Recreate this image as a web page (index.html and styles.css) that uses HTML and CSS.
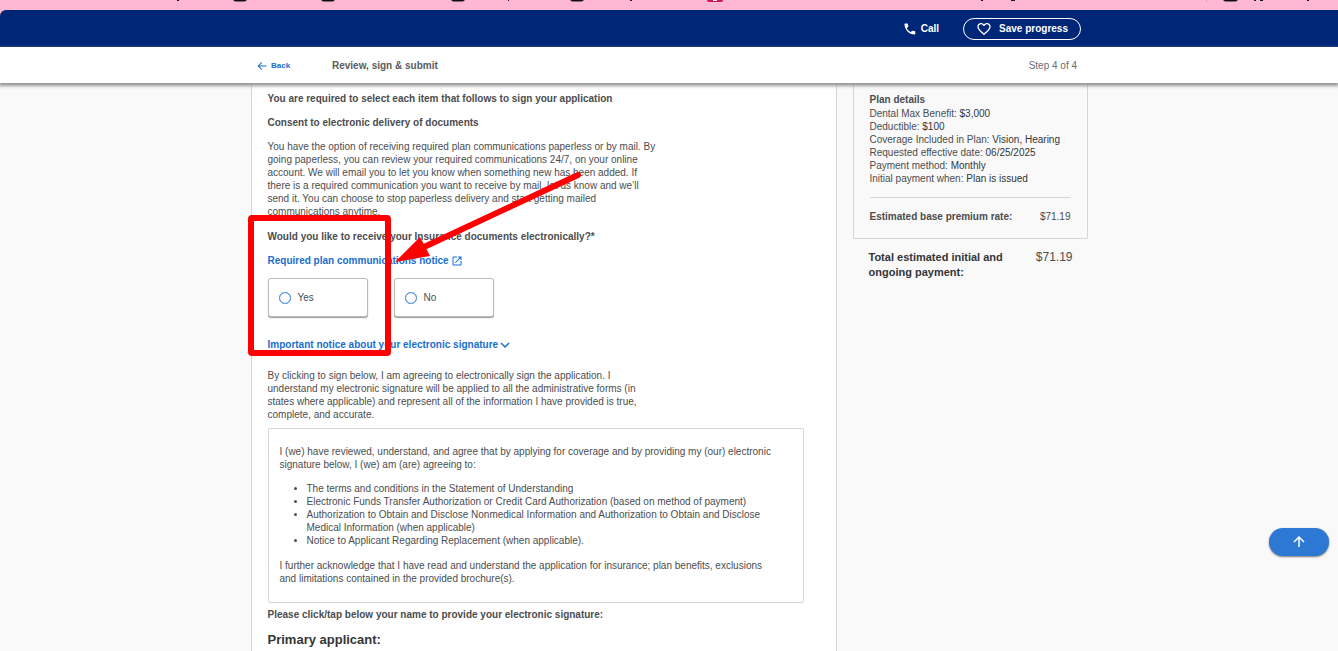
FILE: index.html
```html
<!DOCTYPE html>
<html lang="en">
<head>
<meta charset="utf-8">
<title>Review, sign &amp; submit</title>
<link rel="stylesheet" href="styles.css">
</head>
<body>
<div class="page">
  <div class="strip" aria-hidden="true">
    <svg class="strip-marks" width="1338" height="10" viewBox="0 0 1338 10">
      <path fill="#111" d="M177 0h2v1h-2zM233 0h14l-2 1.500h-10zM321 0h14l-2 1.500h-10zM451 0h14l-2 1.500h-10zM508 0h1v1h-1zM570 0h14l-2 1.500h-10zM630 0h2v1h-2zM981 0h2v1h-2zM1011 0h4v1h-4zM1223 0h15l-2 1.500h-11zM1254 0h2v1h-2zM1260 0h3v1h-3zM1307 0h2v1h-2z"/>
      <path fill="#c9a0b0" d="M1206 0h1v2h-1z"/>
      <path fill="#d4145a" d="M707 0h16q0 2-3 2h-10q-3 0-3-2z"/>
      <path fill="#fff" d="M713 0h4v1h-4z"/>
    </svg>
  </div>
  <header class="topbar">
    <div class="wrap topbar-actions">
      <button class="call" type="button">
        <svg width="14" height="14" viewBox="0 0 24 24" fill="#fff"><path d="M6.600 10.800c1.400 2.800 3.800 5.100 6.600 6.600l2.200-2.200c.3-.3.700-.4 1-.2 1.100.4 2.300.6 3.600.6.600 0 1 .4 1 1V20.500c0 .6-.4 1-1 1C10.600 21.500 2.500 13.400 2.500 3.500c0-.6.400-1 1-1H7.500c.6 0 1 .4 1 1 0 1.300.2 2.500.6 3.600.1.300 0 .7-.2 1z"/></svg>
        Call
      </button>
      <button class="save" type="button">
        <svg width="16" height="16" viewBox="0 0 24 24" fill="#fff"><path d="M16.500 3c-1.740 0-3.410.81-4.500 2.090C10.910 3.810 9.240 3 7.500 3 4.420 3 2 5.420 2 8.500c0 3.780 3.400 6.860 8.550 11.540L12 21.350l1.450-1.320C18.600 15.360 22 12.280 22 8.500 22 5.420 19.580 3 16.500 3zm-4.400 15.550l-.1.100-.1-.1C7.140 14.240 4 11.390 4 8.500 4 6.500 5.500 5 7.500 5c1.540 0 3.040.99 3.570 2.360h1.870C13.460 5.990 14.960 5 16.500 5c2 0 3.500 1.500 3.500 3.500 0 2.890-3.140 5.740-7.900 10.050z"/></svg>
        Save progress
      </button>
    </div>
  </header>
  <nav class="stepbar">
    <div class="wrap stepbar-row">
      <a class="back" href="#">
        <svg width="12" height="12" viewBox="0 0 24 24" fill="currentColor"><path d="M21 11H6.800l5.600-5.600L11 4l-8 8 8 8 1.400-1.400L6.800 13H21z"/></svg>
        Back
      </a>
      <h1 class="step-title">Review, sign &amp; submit</h1>
      <span class="step-count">Step 4 of 4</span>
    </div>
  </nav>
  <div class="wrap columns">
    <main class="form">
      <h2 class="heading">You are required to select each item that follows to sign your application</h2>
      <h2 class="heading">Consent to electronic delivery of documents</h2>
      <p class="copy">You have the option of receiving required plan communications paperless or by mail. By going paperless, you can review your required communications 24/7, on your online account. We will email you to let you know when something new has been added. If<br>there is a required communication you want to receive by mail, let us know and we’ll<br>send it. You can choose to stop paperless delivery and start getting mailed<br>communications anytime.</p>
      <fieldset class="question">
        <legend class="heading">Would you like to receive your Insurance documents electronically?*</legend>
        <a class="link" href="#">Required plan communications notice
          <svg width="12" height="12" viewBox="0 0 24 24" fill="currentColor"><path d="M19 19H5V5h7V3H5a2 2 0 0 0-2 2v14a2 2 0 0 0 2 2h14c1.100 0 2-.9 2-2v-7h-2zM14 3v2h3.590l-9.830 9.830 1.410 1.410L19 6.410V10h2V3z"/></svg>
        </a>
        <div class="choices">
          <label class="choice"><input class="radio" type="radio" name="delivery">Yes</label>
          <label class="choice"><input class="radio" type="radio" name="delivery">No</label>
        </div>
      </fieldset>
      <button class="link expand" type="button">Important notice about your electronic signature
        <svg width="10" height="10" viewBox="0 0 10 10" fill="none" stroke="currentColor" stroke-width="1.500"><path d="M1 3l4 4 4-4"/></svg>
      </button>
      <p class="copy agree">By clicking to sign below, I am agreeing to electronically sign the application. I understand my electronic signature will be applied to all the administrative forms (in states where applicable) and represent all of the information I have provided is true, complete, and accurate.</p>
      <section class="terms">
        <p>I (we) have reviewed, understand, and agree that by applying for coverage and by providing my (our) electronic signature below, I (we) am (are) agreeing to:</p>
        <ul>
          <li>The terms and conditions in the Statement of Understanding</li>
          <li>Electronic Funds Transfer Authorization or Credit Card Authorization (based on method of payment)</li>
          <li>Authorization to Obtain and Disclose Nonmedical Information and Authorization to Obtain and Disclose Medical Information (when applicable)</li>
          <li>Notice to Applicant Regarding Replacement (when applicable).</li>
        </ul>
        <p>I further acknowledge that I have read and understand the application for insurance; plan benefits, exclusions and limitations contained in the provided brochure(s).</p>
      </section>
      <h2 class="heading">Please click/tap below your name to provide your electronic signature:</h2>
      <h3 class="applicant">Primary applicant:</h3>
      <svg class="callout" width="340" height="200" viewBox="248 164 340 200" aria-hidden="true">
        <rect x="251" y="218" width="137" height="135" rx="1" fill="none" stroke="#f00" stroke-width="6" stroke-linejoin="round"/>
        <path d="M578 175L424 247" stroke="#f00" stroke-width="6" stroke-linecap="round"/>
        <path d="M395 262L420 237L430 256Z" fill="#f00"/>
      </svg>
    </main>
    <aside class="summary">
      <section class="plan">
        <h2 class="heading">Plan details</h2>
        <dl class="facts">
          <div><dt>Dental Max Benefit:</dt> <dd>$3,000</dd></div>
          <div><dt>Deductible:</dt> <dd>$100</dd></div>
          <div><dt>Coverage Included in Plan:</dt> <dd>Vision, Hearing</dd></div>
          <div><dt>Requested effective date:</dt> <dd>06/25/2025</dd></div>
          <div><dt>Payment method:</dt> <dd>Monthly</dd></div>
          <div><dt>Initial payment when:</dt> <dd>Plan is issued</dd></div>
        </dl>
        <div class="rate"><strong>Estimated base premium rate:</strong><span>$71.19</span></div>
      </section>
      <div class="total"><strong>Total estimated initial and ongoing payment:</strong><span>$71.19</span></div>
    </aside>
  </div>
  <button class="to-top" type="button" aria-label="Back to top">
    <svg width="16" height="16" viewBox="0 0 16 16" fill="none" stroke="#fff" stroke-width="1.500"><path d="M8 13V4M3 8l5-5 5 5"/></svg>
  </button>
</div>
</body>
</html>
```
FILE: styles.css
```css
* { box-sizing: border-box; }
body {
  margin: 0;
  background: #f9f9f9;
  color: #4b4d4f;
  font: 10px/13px "Liberation Sans", Arial, sans-serif;
}
h1, h2, h3, p, ul, dl, dd, fieldset { margin: 0; padding: 0; }
button { border: 0; background: none; padding: 0; font: inherit; color: inherit; cursor: pointer; }
svg { flex: none; }
.page { display: flex; flex-direction: column; min-height: 100vh; background: #f9f9f9; }
.strip { height: 10px; background: #ffb8d1; overflow: hidden; }
.strip-marks { display: block; }
.wrap { width: 100%; max-width: 836px; margin: 0 auto; }
.topbar {
  background: #002677;
  border-top-left-radius: 6px;
  box-shadow: -6px -6px 0 #ffb8d1;
  clip-path: inset(-6px 0 0 0);
  color: #fff;
  font-weight: 700;
}
.topbar-actions { display: flex; justify-content: flex-end; align-items: center; gap: 24px; padding: 8px 6px 7px; }
.call { display: flex; align-items: center; gap: 4px; }
.save { display: flex; align-items: center; gap: 7px; height: 22px; padding: 0 12px; border: 1px solid #fff; border-radius: 11px; }
.call, .save { line-height: 12px; }
.stepbar { position: relative; z-index: 2; background: #fff; box-shadow: 0 2px 3px 1px #999; }
.stepbar-row { display: flex; align-items: center; padding: 12px 10px 11px 5px; }
.back { display: flex; align-items: center; gap: 3px; width: 76px; color: #196ecf; font-size: 8px; font-weight: 700; text-decoration: none; }
.step-title { flex: 1; font-size: 10px; line-height: 13px; color: #5a5c5e; }
.step-count { color: #6a6c6e; }
.columns { flex: 1; display: grid; grid-template-columns: minmax(0, 586px) minmax(0, 235px); gap: 16px; width: 837px; max-width: 100%; }
.form { position: relative; padding: 9px 32px 3px 16px; background: #fff; border: solid #d5d5d5; border-width: 0 1px; }
.heading { font-size: 10px; line-height: 13px; font-weight: 700; margin-bottom: 11px; padding: 0; }
.copy { max-width: 400px; margin-bottom: 12px; }
.question { border: 0; min-width: 0; }
.link { display: flex; align-items: center; gap: 2px; color: #196ecf; font-weight: 700; text-decoration: none; }
.choices { display: flex; gap: 26px; margin: 11px 0 21px; }
.choice {
  display: flex; align-items: center; gap: 7px; width: 100px; height: 39px; padding: 0 10px;
  border: 1px solid #bbb; border-radius: 3px; box-shadow: 0 1px 1px #999; background: #fff;
}
.radio { appearance: none; width: 12px; height: 12px; margin: 0; border: 1px solid #196ecf; border-radius: 50%; outline: 1px solid #76a9e2; outline-offset: -1px; }
.expand { margin-bottom: 18px; }
.agree { max-width: 385px; margin-bottom: 7px; }
.terms { margin-bottom: 5px; padding: 16px 24px 17px 11px; border: 1px solid #d5d5d5; border-radius: 2px; }
.terms ul { margin: 11px 0 12px; padding-left: 27px; }
.applicant { font-size: 13px; line-height: 16px; color: #333537; }
.callout { position: absolute; left: -4px; top: 81px; pointer-events: none; }
.plan { padding: 10px 16px 15px; border: 1px solid #d5d5d5; border-top: 0; border-radius: 0 0 2px 2px; }
.plan .heading { margin: 0; }
.facts { padding: 1px 0 12px; border-bottom: 1px solid #d5d5d5; }
.facts dt, .facts dd { display: inline; }
.facts dd { color: #333537; }
.rate { display: flex; justify-content: space-between; margin-top: 12px; }
.total { display: flex; justify-content: space-between; gap: 16px; padding: 11px 15px 0 16px; font-size: 12px; line-height: 15px; }
.total strong { max-width: 150px; color: #333537; font-size: 11px; }
.to-top {
  position: fixed; right: 9px; bottom: 95px; z-index: 3;
  display: flex; align-items: center; justify-content: center; width: 60px; height: 28px;
  border-radius: 14px; background: #2d78d2; box-shadow: 0 1px 2px #777;
}
```
